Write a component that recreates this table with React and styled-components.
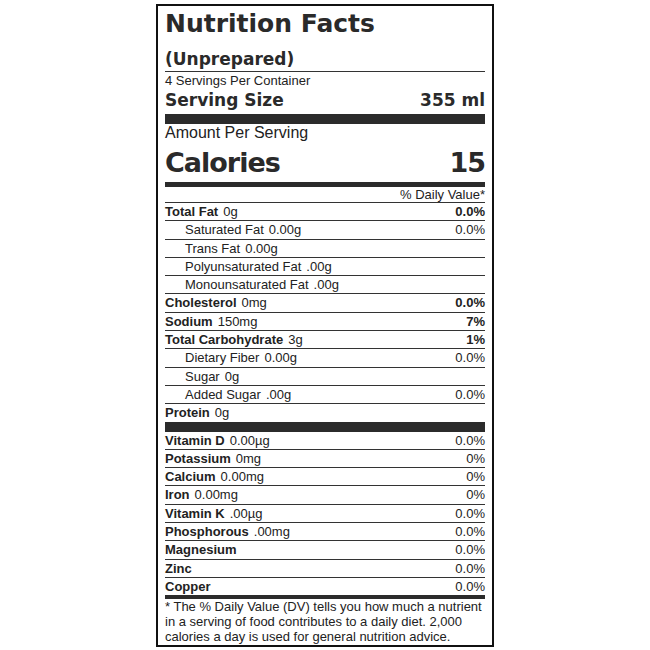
import React from "react";
import styled, { createGlobalStyle } from "styled-components";

const nutrients = [
  { name: "Total Fat", amount: "0g", dv: "0.0%", main: true },
  { name: "Saturated Fat", amount: "0.00g", dv: "0.0%" },
  { name: "Trans Fat", amount: "0.00g" },
  { name: "Polyunsaturated Fat", amount: ".00g" },
  { name: "Monounsaturated Fat", amount: ".00g" },
  { name: "Cholesterol", amount: "0mg", dv: "0.0%", main: true },
  { name: "Sodium", amount: "150mg", dv: "7%", main: true },
  { name: "Total Carbohydrate", amount: "3g", dv: "1%", main: true },
  { name: "Dietary Fiber", amount: "0.00g", dv: "0.0%" },
  { name: "Sugar", amount: "0g" },
  { name: "Added Sugar", amount: ".00g", dv: "0.0%" },
  { name: "Protein", amount: "0g", main: true },
];

const vitamins = [
  { name: "Vitamin D", amount: "0.00µg", dv: "0.0%" },
  { name: "Potassium", amount: "0mg", dv: "0%" },
  { name: "Calcium", amount: "0.00mg", dv: "0%" },
  { name: "Iron", amount: "0.00mg", dv: "0%" },
  { name: "Vitamin K", amount: ".00µg", dv: "0.0%" },
  { name: "Phosphorous", amount: ".00mg", dv: "0.0%" },
  { name: "Magnesium", dv: "0.0%" },
  { name: "Zinc", dv: "0.0%" },
  { name: "Copper", dv: "0.0%" },
];

export default function App() {
  return (
    <>
      <GlobalStyle />
      <Page>
        <Label>
          <Title>Nutrition Facts</Title>
          <Subtitle>(Unprepared)</Subtitle>
          <Servings>4 Servings Per Container</Servings>
          <SizeRow>
            <span>Serving Size</span>
            <span>355 ml</span>
          </SizeRow>
          <Bar $h={10} $mt={4} />
          <Amount>Amount Per Serving</Amount>
          <CaloriesRow>
            <span>Calories</span>
            <span>15</span>
          </CaloriesRow>
          <Bar $h={5} />
          <DailyHead>% Daily Value*</DailyHead>
          {nutrients.map((n, i) => (
            <Row key={n.name} $h={17.3} $last={i === nutrients.length - 1}>
              <Name $indent={!n.main} $bold={n.main}>
                {n.name}
                <Value>{n.amount}</Value>
              </Name>
              {n.dv && <Pct $bold={n.main}>{n.dv}</Pct>}
            </Row>
          ))}
          <Bar $h={10} />
          {vitamins.map((v, i) => (
            <Row key={v.name} $h={17.3} $last={i === vitamins.length - 1}>
              <Name $bold>
                {v.name}
                {v.amount && <Value>{v.amount}</Value>}
              </Name>
              <Pct>{v.dv}</Pct>
            </Row>
          ))}
          <Bar $h={4} />
          <Footnote>
            * The % Daily Value (DV) tells you how much a nutrient in a serving
            of food contributes to a daily diet. 2,000 calories a day is used
            for general nutrition advice.
          </Footnote>
        </Label>
      </Page>
    </>
  );
}

const GlobalStyle = createGlobalStyle`
  body {
    margin: 0;
    background: #fff;
    font-family: "Liberation Sans", Arial, sans-serif;
    color: #222;
  }
`;

const Page = styled.div`
  width: 650px;
  height: 650px;
  display: flex;
  justify-content: center;
  padding-top: 4px;
  box-sizing: border-box;
`;

const Label = styled.div`
  width: 338px;
  height: 643px;
  box-sizing: border-box;
  border: 2px solid #111;
  padding: 0 7px;
  display: flex;
  flex-direction: column;
`;

const Heavy = styled.div`
  font-family: "DejaVu Sans", sans-serif;
  font-weight: bold;
  color: #2a2a2a;
`;

const Title = styled(Heavy)`
  font-size: 25px;
  line-height: 30px;
  padding-top: 3px;
`;

const Subtitle = styled(Heavy)`
  font-size: 17px;
  line-height: 22px;
  margin-top: 9px;
  padding-bottom: 1px;
  border-bottom: 1px solid #333;
`;

const Servings = styled.div`
  font-size: 13px;
  line-height: 15px;
  margin-top: 1px;
`;

const SizeRow = styled(Heavy)`
  display: flex;
  justify-content: space-between;
  font-size: 17px;
  line-height: 20px;
  margin-top: 2px;
`;

const Bar = styled.div`
  height: ${(p) => p.$h}px;
  background: #2b2b2b;
  margin-top: ${(p) => p.$mt || 0}px;
  flex-shrink: 0;
`;

const Amount = styled.div`
  font-size: 16px;
  line-height: 17px;
`;

const CaloriesRow = styled(Heavy)`
  display: flex;
  justify-content: space-between;
  font-size: 27px;
  line-height: 32px;
  letter-spacing: -1px;
  margin-top: 6px;
  margin-bottom: 3px;
`;

const DailyHead = styled.div`
  font-size: 13px;
  line-height: 15px;
  text-align: right;
  border-bottom: 1px solid #333;
`;

const Row = styled.div`
  display: flex;
  justify-content: space-between;
  font-size: 13px;
  line-height: ${(p) => p.$h}px;
  border-bottom: ${(p) => (p.$last ? "none" : "1px solid #333")};
`;

const Name = styled.span`
  padding-left: ${(p) => (p.$indent ? 20 : 0)}px;
  font-weight: ${(p) => (p.$bold ? "bold" : "normal")};
`;

const Value = styled.span`
  font-weight: normal;
  margin-left: 5px;
`;

const Pct = styled.span`
  font-weight: ${(p) => (p.$bold ? "bold" : "normal")};
`;

const Footnote = styled.div`
  font-size: 13px;
  line-height: 15px;
`;
